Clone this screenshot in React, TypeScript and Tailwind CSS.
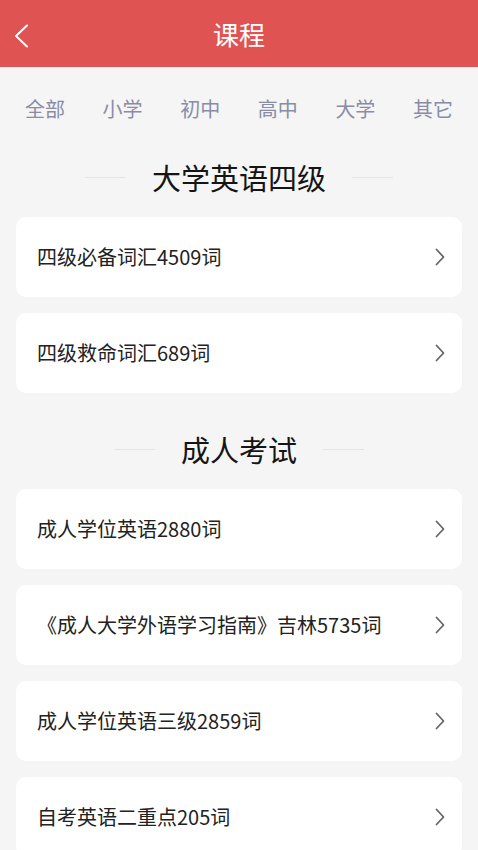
const tabs = ["全部", "小学", "初中", "高中", "大学", "其它"];

const sections = [
  {
    title: "大学英语四级",
    items: ["四级必备词汇4509词", "四级救命词汇689词"],
  },
  {
    title: "成人考试",
    items: [
      "成人学位英语2880词",
      "《成人大学外语学习指南》吉林5735词",
      "成人学位英语三级2859词",
      "自考英语二重点205词",
    ],
  },
];

const font = {
  fontFamily: '"Noto Sans CJK SC", "Noto Sans", sans-serif',
};

const Chevron = () => (
  <svg width="10" height="18" viewBox="0 0 10 18" fill="none">
    <polyline
      points="1.5,1.5 8.5,9 1.5,16.5"
      stroke="#666"
      strokeWidth="1.8"
      strokeLinecap="round"
      strokeLinejoin="round"
    />
  </svg>
);

const App = () => {
  return (
    <div className="min-h-[850px] bg-[#f5f5f5] overflow-hidden" style={font}>
      {/* header */}
      <div className="relative h-[67px] bg-[#e05353] flex items-center justify-center">
        <button className="absolute left-[14px] top-[24px]">
          <svg width="15" height="24" viewBox="0 0 15 24" fill="none">
            <polyline
              points="13,1.5 2,12 13,22.5"
              stroke="#fff"
              strokeWidth="2"
              strokeLinecap="round"
              strokeLinejoin="round"
            />
          </svg>
        </button>
        <h1 className="text-[26px] leading-none text-white">课程</h1>
      </div>

      {/* tabs */}
      <div className="h-[70px] flex justify-between px-[25px] pt-[29px]">
        {tabs.map((t) => (
          <span key={t} className="text-[20px] leading-[26px] text-[#8a8ca6]">
            {t}
          </span>
        ))}
      </div>

      {sections.map((section, i) => (
        <div key={section.title} className={i > 0 ? "mt-4" : ""}>
          <div className="h-[80px] flex items-center justify-center">
            <div className="w-[41px] h-px bg-[#e4e4e4]" />
            <h2 className="mx-[26px] text-[29px] leading-none text-[#151515]">
              {section.title}
            </h2>
            <div className="w-[41px] h-px bg-[#e4e4e4]" />
          </div>
          <div className="flex flex-col gap-4 mx-4">
            {section.items.map((item) => (
              <div
                key={item}
                className="h-[80px] bg-white rounded-[10px] flex items-center justify-between pl-[21px] pr-[17px]"
              >
                <span className="text-[20px] text-[#222]">{item}</span>
                <Chevron />
              </div>
            ))}
          </div>
        </div>
      ))}
    </div>
  );
};

export default App;
